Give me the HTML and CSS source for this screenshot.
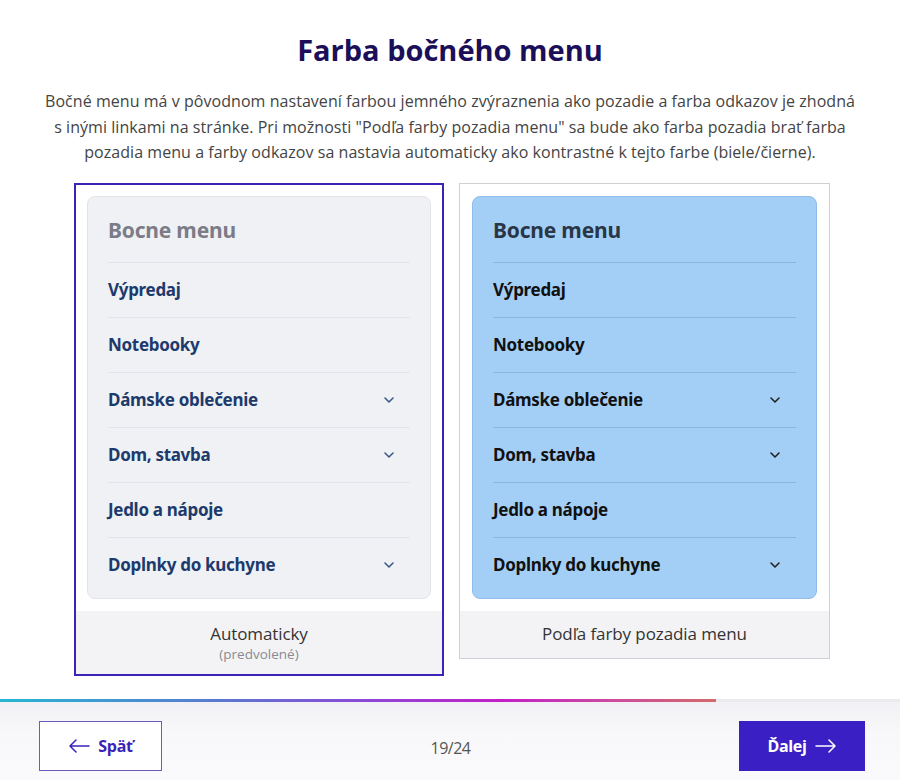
FILE: index.html
```html
<!DOCTYPE html>
<html lang="sk">
<head>
<meta charset="utf-8">
<title>Farba bočného menu</title>
<link rel="stylesheet" href="styles.css">
</head>
<body>
<div class="page">
  <main class="main">
    <h1 class="title">Farba bočného menu</h1>
    <p class="desc">Bočné menu má v pôvodnom nastavení farbou jemného zvýraznenia ako pozadie a farba odkazov je zhodná s inými linkami na stránke. Pri možnosti "Podľa farby pozadia menu" sa bude ako farba pozadia brať farba pozadia menu a farby odkazov sa nastavia automaticky ako kontrastné k tejto farbe (biele/čierne).</p>
    <div class="options">
      <div class="card card-selected">
        <div class="preview">
          <div class="menu menu-auto">
            <div class="menu-head">Bocne menu</div>
            <div class="menu-item"><span>Výpredaj</span></div>
            <div class="menu-item"><span>Notebooky</span></div>
            <div class="menu-item"><span>Dámske oblečenie</span><svg class="chev" viewBox="0 0 12 8"><path d="M2 2l4 4 4-4"/></svg></div>
            <div class="menu-item"><span>Dom, stavba</span><svg class="chev" viewBox="0 0 12 8"><path d="M2 2l4 4 4-4"/></svg></div>
            <div class="menu-item"><span>Jedlo a nápoje</span></div>
            <div class="menu-item"><span>Doplnky do kuchyne</span><svg class="chev" viewBox="0 0 12 8"><path d="M2 2l4 4 4-4"/></svg></div>
          </div>
        </div>
        <div class="label">
          <div class="label-main">Automaticky</div>
          <div class="label-sub">(predvolené)</div>
        </div>
      </div>
      <div class="card">
        <div class="preview">
          <div class="menu menu-bg">
            <div class="menu-head">Bocne menu</div>
            <div class="menu-item"><span>Výpredaj</span></div>
            <div class="menu-item"><span>Notebooky</span></div>
            <div class="menu-item"><span>Dámske oblečenie</span><svg class="chev" viewBox="0 0 12 8"><path d="M2 2l4 4 4-4"/></svg></div>
            <div class="menu-item"><span>Dom, stavba</span><svg class="chev" viewBox="0 0 12 8"><path d="M2 2l4 4 4-4"/></svg></div>
            <div class="menu-item"><span>Jedlo a nápoje</span></div>
            <div class="menu-item"><span>Doplnky do kuchyne</span><svg class="chev" viewBox="0 0 12 8"><path d="M2 2l4 4 4-4"/></svg></div>
          </div>
        </div>
        <div class="label">
          <div class="label-main">Podľa farby pozadia menu</div>
        </div>
      </div>
    </div>
  </main>
  <div class="progress"><div class="progress-fill" style="width: 79.5%"></div></div>
  <footer class="footer">
    <button class="btn btn-back"><svg class="arrow" viewBox="0 0 22 14"><path d="M21 7H2M8 1L2 7l6 6"/></svg>Späť</button>
    <div class="counter">19/24</div>
    <button class="btn btn-next">Ďalej<svg class="arrow" viewBox="0 0 22 14"><path d="M1 7h19M14 1l6 6-6 6"/></svg></button>
  </footer>
</div>
</body>
</html>
```
FILE: styles.css
```css
* { box-sizing: border-box; }
html, body { margin: 0; padding: 0; background: #fff; }
body { font-family: "Open Sans", "Noto Sans", sans-serif; color: #333; }

.page {
  height: 780px;
  display: flex;
  flex-direction: column;
}

.main {
  flex: 1;
  display: flex;
  flex-direction: column;
  align-items: center;
  padding-top: 31px;
}

.title {
  margin: 0;
  font-size: 29px;
  line-height: 38px;
  font-weight: 700;
  color: #1b0f5a;
  letter-spacing: 0;
}

.desc {
  margin: 20px 0 0;
  width: 812px;
  text-align: center;
  font-size: 16px;
  line-height: 25.5px;
  color: #444;
  letter-spacing: 0.05px;
}

.options {
  margin-top: 17px;
  display: flex;
  gap: 15px;
  align-items: flex-start;
  padding-left: 4px;
}

.card {
  width: 371px;
  border: 1px solid #cfcfd4;
  background: #fff;
}

.card-selected {
  width: 370px;
  border: 2px solid #3a24b8;
}

.preview { padding: 12px 12px 12px; }
.card-selected .preview { padding: 11px 11px 12px; }

.menu {
  border-radius: 8px;
  padding: 0 20px 6px;
  font-family: "Noto Sans", "Open Sans", sans-serif;
}

.menu-auto {
  background: #eff1f4;
  border: 1px solid #e2e4e8;
}
.menu-bg {
  background: #a3cff7;
  border: 1px solid #8fbcea;
}

.menu-head {
  height: 65px;
  display: flex;
  align-items: center;
  padding-top: 2px;
  font-size: 21px;
  font-weight: 700;
  letter-spacing: -0.2px;
}
.menu-auto .menu-head { color: #7c7c88; }
.menu-bg .menu-head { color: #2a3645; }

.menu-item {
  height: 55px;
  display: flex;
  align-items: center;
  justify-content: space-between;
  font-size: 17px;
  font-weight: 700;
  letter-spacing: -0.3px;
  border-top: 1px solid;
}
.menu-auto .menu-item { color: #1d3a6c; border-color: #e1e4ea; }
.menu-bg .menu-item { color: #111; border-color: #86b6e2; }

.chev {
  width: 12px;
  height: 8px;
  margin-right: 15px;
  fill: none;
  stroke: currentColor;
  stroke-width: 1.6;
  stroke-linecap: round;
  stroke-linejoin: round;
}
.menu-auto .chev { stroke: #3b5a88; }
.menu-bg .chev { stroke: #222; }

.label {
  background: #f3f3f6;
  text-align: center;
  padding: 11px 0 11px;
}
.card:not(.card-selected) .label { padding: 11px 0 13px; }

.label-main {
  font-size: 17px;
  line-height: 23px;
  color: #333;
  letter-spacing: -0.1px;
}
.label-sub {
  font-size: 13.5px;
  line-height: 18px;
  color: #8a8a90;
}

.progress {
  height: 3px;
  background: #ebebef;
}
.progress-fill {
  height: 3px;
  background: linear-gradient(90deg, #26b6d2 0%, #5a7ad0 30%, #8a4ad8 50%, #c41ec8 70%, #cc4aa0 85%, #d26a6a 100%);
}

.footer {
  height: 78px;
  display: flex;
  align-items: flex-start;
  justify-content: space-between;
  padding: 19px 35px 0 39px;
  background: linear-gradient(180deg, #f1f1f5 0%, #f8f8fa 40%, #fafafc 100%);
}

.btn {
  height: 50px;
  display: flex;
  align-items: center;
  justify-content: center;
  gap: 8px;
  font-family: "Open Sans", "Noto Sans", sans-serif;
  font-size: 16px;
  font-weight: 700;
  letter-spacing: -0.3px;
  cursor: pointer;
}

.btn-back {
  width: 123px;
  background: #fff;
  border: 1px solid #6a5bbf;
  color: #3a24b8;
}

.btn-next {
  width: 126px;
  background: #3a1fc4;
  border: 1px solid #3a1fc4;
  color: #fff;
}

.arrow {
  width: 22px;
  height: 14px;
  fill: none;
  stroke: currentColor;
  stroke-width: 1.5;
  stroke-linecap: round;
  stroke-linejoin: round;
}

.counter {
  margin-top: 16px;
  font-size: 16px;
  color: #555;
  letter-spacing: -0.5px;
}
```
